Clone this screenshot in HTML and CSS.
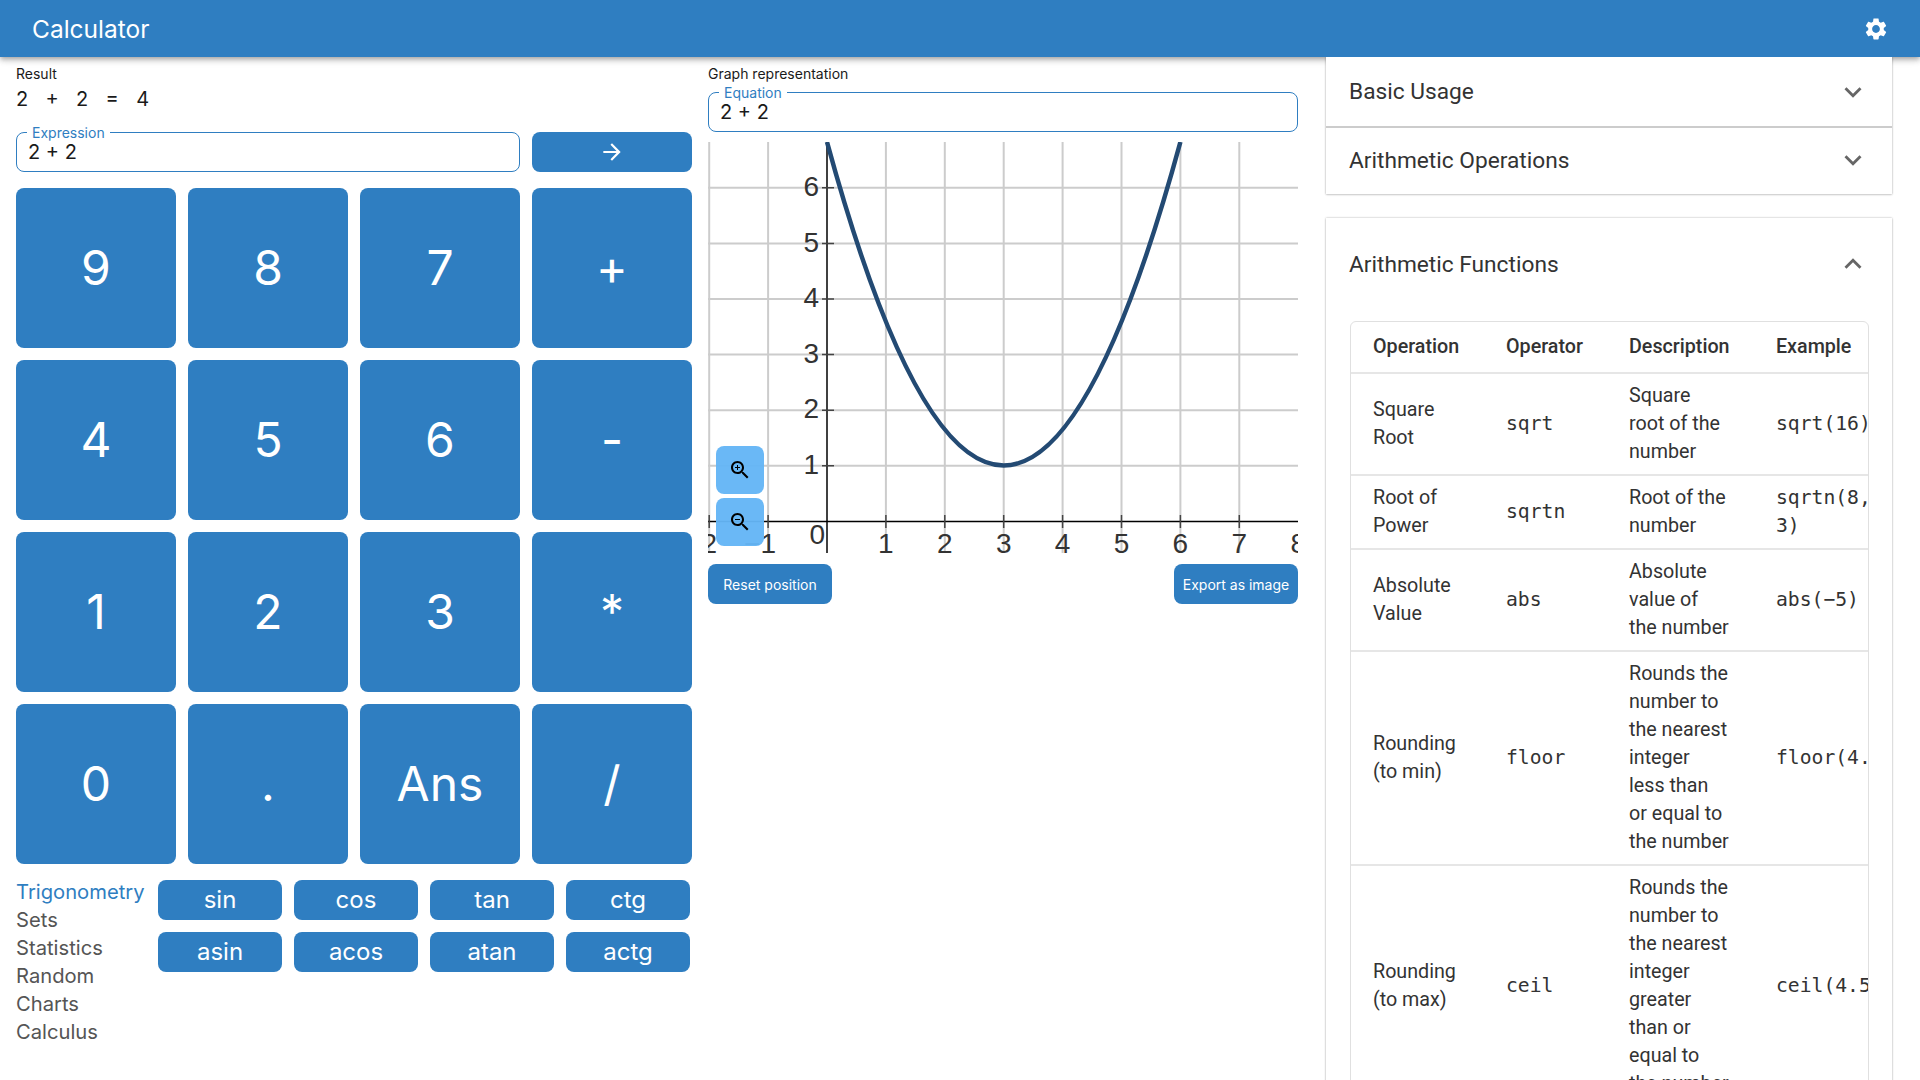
FILE: index.html
```html
<!DOCTYPE html>
<html lang="en">
<head>
    <meta charset="UTF-8">
    <title>Calculator</title>
    <link rel="stylesheet" href="styles.css">
</head>
<body>
    <header class="topbar">
        <div class="topbar-title">Calculator</div>
        <svg class="gear" viewBox="0 0 24 24"><path d="M19.14 12.94c.04-.3.06-.61.06-.94 0-.32-.02-.64-.07-.94l2.03-1.58c.18-.14.23-.41.12-.61l-1.92-3.32c-.12-.22-.37-.29-.59-.22l-2.39.96c-.5-.38-1.03-.7-1.62-.94l-.36-2.54c-.04-.24-.24-.41-.48-.41h-3.84c-.24 0-.43.17-.47.41l-.36 2.54c-.59.24-1.13.57-1.62.94l-2.39-.96c-.22-.08-.47 0-.59.22L2.74 8.87c-.12.21-.08.47.12.61l2.03 1.58c-.05.3-.09.63-.09.94s.02.64.07.94l-2.03 1.58c-.18.14-.23.41-.12.61l1.92 3.32c.12.22.37.29.59.22l2.39-.96c.5.38 1.03.7 1.62.94l.36 2.54c.05.24.24.41.48.41h3.84c.24 0 .44-.17.47-.41l.36-2.54c.59-.24 1.13-.56 1.62-.94l2.39.96c.22.08.47 0 .59-.22l1.92-3.32c.12-.22.07-.47-.12-.61l-2.01-1.58zM12 15.6c-1.98 0-3.6-1.62-3.6-3.6s1.62-3.6 3.6-3.6 3.6 1.62 3.6 3.6-1.62 3.6-3.6 3.6z"/></svg>
    </header>

    <main class="layout">
        <section class="calc">
            <div class="small-label">Result</div>
            <div class="result">2 + 2 = 4</div>

            <div class="expr-row">
                <div class="field">
                    <span class="field-label">Expression</span>
                    <div class="field-value">2 + 2</div>
                </div>
                <button class="btn arrow-btn">
                    <svg viewBox="0 0 24 24"><path d="m12 4-1.41 1.41L16.17 11H4v2h12.17l-5.58 5.59L12 20l8-8z"/></svg>
                </button>
            </div>

            <div class="keypad">
                <button class="btn key">9</button>
                <button class="btn key">8</button>
                <button class="btn key">7</button>
                <button class="btn key">+</button>
                <button class="btn key">4</button>
                <button class="btn key">5</button>
                <button class="btn key">6</button>
                <button class="btn key">-</button>
                <button class="btn key">1</button>
                <button class="btn key">2</button>
                <button class="btn key">3</button>
                <button class="btn key">*</button>
                <button class="btn key">0</button>
                <button class="btn key">.</button>
                <button class="btn key">Ans</button>
                <button class="btn key">/</button>
            </div>

            <div class="functions">
                <ul class="tabs">
                    <li class="tab-active">Trigonometry</li>
                    <li>Sets</li>
                    <li>Statistics</li>
                    <li>Random</li>
                    <li>Charts</li>
                    <li>Calculus</li>
                </ul>
                <div class="fn-grid">
                    <button class="btn fn">sin</button>
                    <button class="btn fn">cos</button>
                    <button class="btn fn">tan</button>
                    <button class="btn fn">ctg</button>
                    <button class="btn fn">asin</button>
                    <button class="btn fn">acos</button>
                    <button class="btn fn">atan</button>
                    <button class="btn fn">actg</button>
                </div>
            </div>
        </section>

        <section class="graph-col">
            <div class="small-label">Graph representation</div>
            <div class="field equation">
                <span class="field-label">Equation</span>
                <div class="field-value">2 + 2</div>
            </div>

            <div class="graph">
                <svg class="plot" viewBox="0 0 590 411">
                    <g class="grid">
                        <line x1="1.2" y1="0" x2="1.2" y2="411"/>
                        <line x1="60.1" y1="0" x2="60.1" y2="411"/>
                        <line x1="177.9" y1="0" x2="177.9" y2="411"/>
                        <line x1="236.8" y1="0" x2="236.8" y2="411"/>
                        <line x1="295.7" y1="0" x2="295.7" y2="411"/>
                        <line x1="354.6" y1="0" x2="354.6" y2="411"/>
                        <line x1="413.5" y1="0" x2="413.5" y2="411"/>
                        <line x1="472.4" y1="0" x2="472.4" y2="411"/>
                        <line x1="531.3" y1="0" x2="531.3" y2="411"/>
                        <line x1="0" y1="45.8" x2="590" y2="45.8"/>
                        <line x1="0" y1="101.4" x2="590" y2="101.4"/>
                        <line x1="0" y1="157" x2="590" y2="157"/>
                        <line x1="0" y1="212.6" x2="590" y2="212.6"/>
                        <line x1="0" y1="268.2" x2="590" y2="268.2"/>
                        <line x1="0" y1="323.8" x2="590" y2="323.8"/>
                    </g>
                    <g class="axes">
                        <line x1="119" y1="0" x2="119" y2="411"/>
                        <line x1="0" y1="379.4" x2="590" y2="379.4"/>
                    </g>
                    <path class="ticks" d="M1.2 373v13M60.1 373v13M177.9 373v13M236.8 373v13M295.7 373v13M354.6 373v13M413.5 373v13M472.4 373v13M531.3 373v13M114 45.8h12M114 101.4h12M114 157h12M114 212.6h12M114 268.2h12M114 323.8h12"/>
                    <g class="tick-labels">
                        <text x="111" y="54" text-anchor="end">6</text>
                        <text x="111" y="110" text-anchor="end">5</text>
                        <text x="111" y="165" text-anchor="end">4</text>
                        <text x="111" y="221" text-anchor="end">3</text>
                        <text x="111" y="276" text-anchor="end">2</text>
                        <text x="111" y="332" text-anchor="end">1</text>
                        <text x="117" y="402" text-anchor="end">0</text>
                        <text x="9" y="411" text-anchor="end">−2</text>
                        <text x="68" y="411" text-anchor="end">−1</text>
                        <text x="177.9" y="411" text-anchor="middle">1</text>
                        <text x="236.8" y="411" text-anchor="middle">2</text>
                        <text x="295.7" y="411" text-anchor="middle">3</text>
                        <text x="354.6" y="411" text-anchor="middle">4</text>
                        <text x="413.5" y="411" text-anchor="middle">5</text>
                        <text x="472.4" y="411" text-anchor="middle">6</text>
                        <text x="531.3" y="411" text-anchor="middle">7</text>
                        <text x="590.2" y="411" text-anchor="middle">8</text>
                    </g>
                    <path class="curve" d="M119 0Q295.7 647 472.4 0"/>
                </svg>

                <div class="zoom-btns">
                    <button class="zoom-btn">
                        <svg viewBox="0 0 24 24"><path d="M15.5 14h-.79l-.28-.27C15.41 12.59 16 11.11 16 9.5 16 5.91 13.09 3 9.5 3S3 5.91 3 9.5 5.91 16 9.5 16c1.61 0 3.09-.59 4.23-1.57l.27.28v.79l5 4.99L20.49 19l-4.99-5zm-6 0C7.01 14 5 11.99 5 9.5S7.01 5 9.5 5 14 7.01 14 9.5 11.99 14 9.5 14z"/><path d="M12 10h-2v2H9v-2H7V9h2V7h1v2h2v1z"/></svg>
                    </button>
                    <button class="zoom-btn">
                        <svg viewBox="0 0 24 24"><path d="M15.5 14h-.79l-.28-.27C15.41 12.59 16 11.11 16 9.5 16 5.91 13.09 3 9.5 3S3 5.91 3 9.5 5.91 16 9.5 16c1.61 0 3.09-.59 4.23-1.57l.27.28v.79l5 4.99L20.49 19l-4.99-5zm-6 0C7.01 14 5 11.99 5 9.5S7.01 5 9.5 5 14 7.01 14 9.5 11.99 14 9.5 14z"/><path d="M7 9h5v1H7z"/></svg>
                    </button>
                </div>
            </div>

            <div class="graph-actions">
                <button class="btn small-btn">Reset position</button>
                <button class="btn small-btn">Export as image</button>
            </div>
        </section>

        <section class="docs">
            <div class="panel">
                <div class="panel-head">
                    <span>Basic Usage</span>
                    <svg class="chevron" viewBox="0 0 24 24"><path d="M16.59 8.59 12 13.17 7.41 8.59 6 10l6 6 6-6z"/></svg>
                </div>
                <div class="panel-head panel-divided">
                    <span>Arithmetic Operations</span>
                    <svg class="chevron" viewBox="0 0 24 24"><path d="M16.59 8.59 12 13.17 7.41 8.59 6 10l6 6 6-6z"/></svg>
                </div>
            </div>

            <div class="panel panel-open">
                <div class="panel-head panel-head-open">
                    <span>Arithmetic Functions</span>
                    <svg class="chevron" viewBox="0 0 24 24"><path d="m12 8-6 6 1.41 1.41L12 10.83l4.59 4.58L18 14z"/></svg>
                </div>
                <div class="table-wrap">
                    <table class="ref-table">
                        <colgroup>
                            <col class="col-op">
                            <col class="col-sym">
                            <col class="col-desc">
                            <col class="col-ex">
                        </colgroup>
                        <thead>
                            <tr><th>Operation</th><th>Operator</th><th>Description</th><th>Example</th></tr>
                        </thead>
                        <tbody>
                            <tr><td>Square Root</td><td><code>sqrt</code></td><td>Square<br>root of the<br>number</td><td><code>sqrt(16)</code></td></tr>
                            <tr><td>Root of Power</td><td><code>sqrtn</code></td><td>Root of the<br>number</td><td><code>sqrtn(8, 3)</code></td></tr>
                            <tr><td>Absolute Value</td><td><code>abs</code></td><td>Absolute<br>value of<br>the number</td><td><code>abs(−5)</code></td></tr>
                            <tr><td>Rounding (to min)</td><td><code>floor</code></td><td>Rounds the<br>number to<br>the nearest<br>integer<br>less than<br>or equal to<br>the number</td><td><code>floor(4.5)</code></td></tr>
                            <tr><td>Rounding (to max)</td><td><code>ceil</code></td><td>Rounds the<br>number to<br>the nearest<br>integer<br>greater<br>than or<br>equal to<br>the number</td><td><code>ceil(4.5)</code></td></tr>
                        </tbody>
                    </table>
                </div>
            </div>
        </section>
    </main>
</body>
</html>
```

FILE: styles.css
```css
* {
    box-sizing: border-box;
}

html, body {
    height: 100%;
}

body {
    margin: 0;
    background-color: #ffffff;
    color: #1a1a1a;
    font-family: Inter, "Liberation Sans", sans-serif;
    overflow: hidden;
}

button {
    font-family: inherit;
    border: none;
    padding: 0;
    cursor: pointer;
}

.topbar {
    position: relative;
    height: 57px;
    padding: 0 32px;
    display: flex;
    align-items: center;
    justify-content: space-between;
    background-color: #2f7ec1;
    color: #ffffff;
    box-shadow: 0 2px 4px -1px rgba(0, 0, 0, 0.2), 0 4px 5px rgba(0, 0, 0, 0.14), 0 1px 10px rgba(0, 0, 0, 0.12);
}

.topbar-title {
    font-size: 24.5px;
    line-height: 32px;
}

.gear {
    width: 26px;
    height: 26px;
    margin-right: -1px;
    fill: #ffffff;
}

.layout {
    display: flex;
    height: 1023px;
    padding-left: 16px;
}

.calc {
    width: 676px;
    padding-top: 8px;
}

.small-label {
    font-size: 14px;
    line-height: 18px;
}

.result {
    margin-top: 4px;
    font-size: 20px;
    line-height: 24px;
    word-spacing: 11.7px;
}

.btn {
    display: flex;
    align-items: center;
    justify-content: center;
    background-color: #2f7ec1;
    color: #ffffff;
    border-radius: 8px;
}

.expr-row {
    display: flex;
    gap: 12px;
    margin-top: 21px;
}

.field {
    position: relative;
    height: 40px;
    flex: 1;
    padding: 0 11px;
    border: 1px solid #2f7ec1;
    border-radius: 8px;
}

.field-label {
    position: absolute;
    top: -9px;
    left: 10px;
    padding: 0 5px;
    background-color: #ffffff;
    color: #2f7ec1;
    font-size: 14px;
    line-height: 18px;
}

.field-value {
    font-size: 20px;
    line-height: 38px;
}

.arrow-btn {
    width: 160px;
    height: 40px;
}

.arrow-btn svg {
    width: 26px;
    height: 26px;
    fill: #ffffff;
}

.keypad {
    display: grid;
    grid-template-columns: repeat(4, 160px);
    grid-auto-rows: 160px;
    gap: 12px;
    margin-top: 16px;
}

.key {
    padding-bottom: 2px;
    font-size: 48px;
}

.functions {
    display: flex;
    margin-top: 16px;
}

.tabs {
    width: 142px;
    margin: -2px 0 0;
    padding: 0;
    list-style: none;
    color: #555555;
    font-size: 20.2px;
    line-height: 28px;
}

.tab-active {
    color: #2f7ec1;
}

.fn-grid {
    display: grid;
    grid-template-columns: repeat(4, 124px);
    grid-auto-rows: 40px;
    gap: 12px;
}

.fn {
    padding-bottom: 1px;
    font-size: 24px;
}

.graph-col {
    width: 590px;
    margin-left: 16px;
    padding-top: 8px;
}

.equation {
    flex: none;
    margin-top: 9px;
}

.graph {
    position: relative;
    height: 411px;
    margin-top: 10px;
}

.plot {
    display: block;
    width: 590px;
    height: 411px;
}

.grid line {
    stroke: #cccccc;
    stroke-width: 2;
}

.axes line {
    stroke: #000000;
    stroke-width: 1.5;
}

.ticks {
    stroke: #444444;
    stroke-width: 1.5;
    fill: none;
}

.tick-labels text {
    font-family: "Liberation Sans", sans-serif;
    font-size: 28px;
    fill: #333333;
}

.curve {
    fill: none;
    stroke: #234a73;
    stroke-width: 4.5;
}

.zoom-btns {
    position: absolute;
    left: 8px;
    top: 304px;
    display: flex;
    flex-direction: column;
    gap: 4px;
}

.zoom-btn {
    width: 48px;
    height: 48px;
    display: flex;
    align-items: center;
    justify-content: center;
    background-color: rgba(100, 181, 246, 0.96);
    border-radius: 8px;
}

.zoom-btn svg {
    width: 24px;
    height: 24px;
    fill: #000000;
}

.graph-actions {
    display: flex;
    justify-content: space-between;
    margin-top: 11px;
}

.small-btn {
    width: 124px;
    height: 40px;
    font-size: 14px;
}

.docs {
    position: relative;
    width: 566px;
    margin-left: 26px;
    overflow: hidden;
    padding: 0 2px;
    box-sizing: content-box;
}

.panel {
    background-color: #ffffff;
    box-shadow: 0 0 2px rgba(0, 0, 0, 0.3), 0 1px 2px rgba(0, 0, 0, 0.12);
}

.panel-open {
    margin-top: 24px;
    padding-bottom: 24px;
}

.panel-head {
    height: 69px;
    padding: 0 22px 0 23px;
    display: flex;
    align-items: center;
    justify-content: space-between;
    color: #333333;
    font-family: Roboto, sans-serif;
    font-size: 22.7px;
}

.panel-divided {
    height: 68px;
    padding-bottom: 2px;
    border-top: 2px solid #cccccc;
}

.panel-head-open {
    height: 92px;
}

.chevron {
    width: 34px;
    height: 34px;
    fill: #666666;
}

.table-wrap {
    width: 519px;
    margin: 11px 0 0 24px;
    border: 1px solid #e0e0e0;
    border-radius: 6px;
    overflow: hidden;
}

.ref-table {
    width: 553px;
    table-layout: fixed;
    border-collapse: collapse;
    font-family: Roboto, sans-serif;
    font-size: 19.7px;
    line-height: 28px;
    color: #333333;
}

.col-op {
    width: 133px;
}

.col-sym {
    width: 123px;
}

.col-desc {
    width: 147px;
}

.col-ex {
    width: 150px;
}

.ref-table th {
    height: 51px;
    padding: 0 0 0 22px;
    text-align: left;
    font-weight: 500;
}

.ref-table td {
    padding: 8px 22px;
    border-top: 2px solid #e6e6e6;
}

.ref-table td:last-child {
    padding-right: 0;
}

.ref-table code {
    font-family: "DejaVu Sans Mono", monospace;
    font-size: 19.7px;
}
```
